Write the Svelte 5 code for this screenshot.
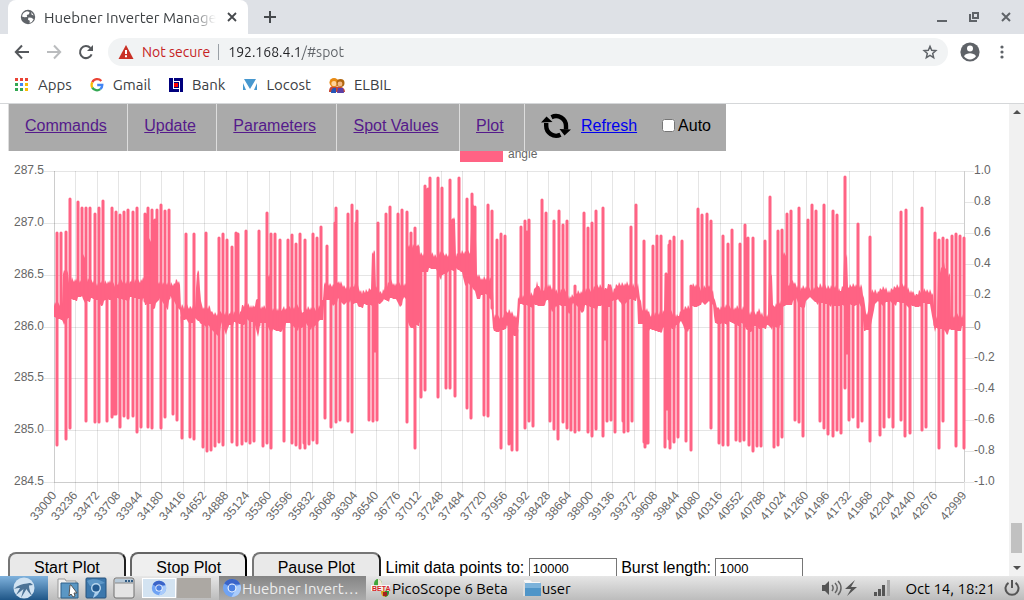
<script lang="ts">
	let refreshAuto = $state(false);
	let maxPoints = $state('10000');
	let burstLength = $state('1000');
	let address = $state('192.168.4.1/#spot');

	const navItems = ['Commands', 'Update', 'Parameters', 'Spot Values', 'Plot'];

	// Plot area
	const left = 54;
	const right = 964;
	const top = 171;
	const bottom = 482;

	// Category axis: one label every 236 samples, plus the last sample
	const firstSample = 33000;
	const lastSample = 42999;
	const xTicks: { label: number; x: number }[] = [];
	for (let s = firstSample; s < 42700; s += 236) {
		xTicks.push({ label: s, x: Math.round(left + ((right - left) * (s - firstSample)) / (lastSample - firstSample)) });
	}
	xTicks.push({ label: lastSample, x: right });

	const leftTicks = ['287.5', '287.0', '286.5', '286.0', '285.5', '285.0', '284.5'].map((label, i) => ({
		label,
		y: Math.round(top + ((bottom - top) * i) / 6)
	}));
	const rightTicks = ['1.0', '0.8', '0.6', '0.4', '0.2', '0', '-0.2', '-0.4', '-0.6', '-0.8', '-1.0'].map((label, i) => ({
		label,
		y: Math.round(top + ((bottom - top) * i) / 10)
	}));

	// Noise band of the signal: x, upper edge, lower edge
	const band = [
		[54, 305, 318], [62, 304, 319], [63, 272, 320], [65, 270, 325], [68, 272, 319], [69, 285, 319],
		[71, 279, 299], [78, 281, 299], [82, 283, 297], [83, 256, 299], [86, 256, 305], [87, 281, 300],
		[92, 281, 300], [98, 285, 300], [101, 282, 305], [107, 282, 300], [115, 285, 300], [120, 282, 300],
		[130, 282, 299], [140, 281, 298], [144, 280, 301], [145, 240, 306], [152, 240, 303], [153, 281, 308],
		[157, 282, 304], [160, 283, 299], [168, 284, 308], [170, 284, 298], [174, 284, 301], [177, 281, 306],
		[180, 285, 308], [181, 306, 323], [186, 307, 320], [190, 308, 323], [195, 306, 320], [197, 273, 321],
		[199, 273, 322], [201, 303, 324], [204, 309, 324], [210, 308, 328], [212, 313, 331], [218, 314, 335],
		[222, 313, 324], [226, 313, 335], [229, 314, 324], [240, 313, 324], [243, 306, 324], [247, 304, 321],
		[250, 306, 323], [254, 308, 321], [258, 297, 335], [260, 307, 325], [266, 308, 323], [267, 275, 325],
		[270, 275, 330], [271, 309, 330], [276, 309, 332], [281, 313, 331], [283, 306, 328], [286, 311, 325],
		[290, 307, 324], [300, 307, 330], [303, 314, 328], [306, 309, 323], [313, 309, 330], [320, 308, 319],
		[323, 300, 318], [324, 283, 303], [330, 286, 300], [333, 286, 305], [338, 281, 300], [344, 287, 305],
		[349, 288, 299], [353, 287, 305], [357, 284, 303], [358, 287, 306], [362, 293, 306], [367, 291, 306],
		[371, 288, 305], [372, 253, 305], [375, 253, 305], [376, 287, 305], [380, 293, 305], [384, 290, 299],
		[391, 281, 300], [396, 286, 299], [400, 284, 306], [404, 284, 299], [407, 284, 300], [408, 246, 322],
		[410, 246, 327], [419, 247, 327], [420, 254, 273], [424, 255, 271], [430, 253, 270], [436, 256, 269],
		[441, 254, 278], [447, 255, 273], [451, 255, 269], [452, 219, 269], [455, 220, 269], [456, 255, 270],
		[462, 253, 272], [465, 253, 284], [470, 252, 286], [472, 206, 288], [475, 208, 291], [477, 274, 298],
		[482, 279, 297], [486, 279, 294], [491, 279, 299], [493, 292, 326], [494, 317, 333], [498, 317, 333],
		[502, 317, 329], [507, 313, 327], [510, 311, 331], [514, 315, 336], [517, 318, 335], [518, 298, 332],
		[520, 297, 306], [528, 296, 305], [533, 294, 306], [537, 282, 306], [539, 289, 306], [543, 290, 305],
		[548, 285, 301], [552, 289, 312], [556, 291, 305], [560, 292, 307], [566, 290, 306], [569, 297, 313],
		[573, 297, 305], [577, 292, 306], [582, 292, 312], [585, 291, 307], [592, 290, 307], [598, 286, 308],
		[602, 286, 306], [605, 291, 307], [610, 283, 305], [613, 291, 302], [618, 285, 299], [625, 284, 306],
		[630, 285, 299], [637, 286, 299], [638, 286, 326], [642, 309, 324], [647, 309, 325], [650, 316, 331],
		[656, 314, 331], [661, 314, 331], [664, 312, 329], [665, 274, 329], [668, 274, 329], [669, 312, 328],
		[678, 316, 327], [681, 311, 321], [685, 308, 329], [690, 307, 331], [691, 286, 307], [696, 286, 307],
		[701, 289, 303], [705, 288, 306], [709, 285, 301], [713, 291, 303], [715, 303, 325], [718, 309, 325],
		[724, 307, 322], [735, 308, 324], [743, 308, 325], [746, 309, 329], [750, 314, 331], [756, 313, 327],
		[759, 311, 329], [763, 316, 327], [768, 315, 327], [769, 274, 327], [772, 275, 330], [773, 307, 326],
		[782, 302, 327], [783, 254, 308], [786, 254, 305], [787, 285, 305], [793, 282, 303], [796, 285, 299],
		[800, 289, 307], [804, 288, 306], [810, 289, 298], [816, 290, 301], [820, 285, 305], [827, 288, 303],
		[834, 287, 307], [840, 291, 305], [843, 287, 303], [844, 257, 304], [847, 257, 305], [848, 288, 304],
		[853, 285, 305], [858, 286, 303], [862, 287, 310], [864, 300, 331], [867, 316, 329], [871, 292, 327],
		[875, 291, 305], [878, 292, 301], [884, 288, 305], [890, 292, 301], [896, 286, 304], [904, 286, 303],
		[910, 291, 307], [916, 296, 307], [920, 291, 305], [930, 291, 304], [933, 294, 320], [935, 316, 330],
		[937, 318, 330], [938, 276, 330], [944, 263, 329], [947, 276, 333], [950, 275, 331], [951, 316, 331],
		[958, 316, 330], [964, 316, 327]
	];

	// Both band edges at x, between the two nearest points
	function edges(x: number) {
		const i = Math.max(1, band.findIndex((b) => b[0] >= x));
		const [x0, hi0, lo0] = band[i - 1];
		const [x1, hi1, lo1] = band[i];
		const t = (x - x0) / (x1 - x0);
		return [hi0 + (hi1 - hi0) * t, lo0 + (lo1 - lo0) * t];
	}

	// Sample noise along the band edges
	const upper: string[] = [];
	const lower: string[] = [];
	for (let x = left; x <= right; x++) {
		const [hi, lo] = edges(x);
		upper.push(`${x} ${Math.round(hi + ((x * 37) % 11) / 2 - 3)}`);
		lower.unshift(`${x} ${Math.round(lo + ((x * 53) % 13) / 3 - 2)}`);
	}
	const bandPath = `M${upper.join('L')}L${lower.join('L')}Z`;

	// Spikes leaving the band upwards: x, tip
	const peaks = [
		[57, 232], [61, 232], [66, 231], [70, 198], [78, 201], [82, 207], [86, 207], [90, 207], [95, 213],
		[99, 207], [103, 200], [112, 207], [116, 211], [120, 214], [124, 211], [128, 209], [133, 211], [137, 207],
		[145, 213], [148, 207], [152, 209], [155, 219], [157, 209], [161, 204], [165, 210], [169, 209],
		[186, 233], [194, 233], [206, 232], [219, 237], [223, 233], [227, 239], [232, 246], [236, 232], [238, 233],
		[246, 230], [259, 230], [267, 212], [271, 233], [275, 233], [280, 239], [288, 239], [292, 234], [296, 243],
		[300, 233], [305, 239], [313, 233], [317, 237], [321, 226], [327, 245], [335, 222], [336, 207], [348, 213],
		[352, 204], [356, 222], [357, 210], [378, 222], [386, 213], [390, 206], [398, 213], [402, 209], [407, 211],
		[411, 232], [415, 227], [418, 246], [425, 185], [428, 188], [430, 177], [438, 177], [442, 187], [450, 179],
		[453, 219], [459, 177], [467, 198], [472, 193], [475, 206], [488, 204], [492, 210], [497, 239], [501, 233],
		[505, 235], [521, 226], [525, 220], [527, 231], [529, 219], [542, 199], [546, 212], [554, 220], [559, 210],
		[563, 224], [567, 220], [575, 285], [584, 212], [588, 227], [592, 222], [596, 210], [603, 207], [631, 226],
		[636, 204], [644, 240], [653, 245], [657, 235], [661, 235], [666, 273], [669, 244], [670, 240], [674, 236],
		[682, 240], [691, 285], [698, 208], [702, 214], [707, 213], [711, 220], [723, 235], [728, 243], [732, 229],
		[740, 243], [745, 224], [748, 237], [753, 237], [765, 240], [770, 196], [778, 230], [782, 229], [787, 213],
		[791, 210], [799, 207], [808, 219], [812, 204], [816, 210], [824, 204], [833, 210], [837, 214], [845, 176],
		[858, 223], [870, 236], [901, 211], [906, 209], [922, 207], [935, 232], [939, 239], [943, 237], [947, 239],
		[952, 235], [956, 233], [960, 235], [964, 237]
	];

	// Spikes leaving the band downwards: x, tip
	const dips = [
		[57, 446], [66, 440], [70, 429], [86, 422], [95, 423], [99, 423], [107, 422], [112, 418], [114, 415],
		[116, 415], [120, 428], [124, 417], [128, 419], [133, 417], [137, 433], [141, 428], [148, 428], [152, 429],
		[161, 429], [165, 418], [173, 415], [177, 421], [182, 439], [190, 438], [194, 440], [203, 448], [207, 452],
		[211, 451], [215, 447], [219, 443], [223, 446], [232, 443], [237, 446], [242, 445], [246, 442], [250, 444],
		[254, 442], [263, 447], [267, 444], [271, 449], [284, 442], [292, 444], [296, 446], [300, 449], [304, 444],
		[305, 449], [309, 445], [313, 441], [317, 444], [325, 419], [331, 428], [336, 423], [340, 421], [348, 422],
		[352, 433], [369, 421], [373, 422], [375, 352], [377, 421], [407, 423], [415, 449], [421, 398], [425, 391],
		[438, 398], [446, 389], [450, 389], [455, 397], [467, 409], [471, 419], [484, 416], [488, 417], [501, 449],
		[509, 445], [512, 451], [517, 451], [525, 429], [529, 422], [533, 427], [550, 422], [554, 430], [558, 440],
		[563, 423], [567, 429], [571, 431], [575, 433], [579, 431], [588, 433], [592, 437], [596, 430], [603, 437],
		[605, 340], [607, 422], [611, 421], [615, 433], [623, 422], [624, 433], [628, 432], [632, 422], [644, 443],
		[645, 448], [647, 444], [648, 444], [665, 448], [667, 410], [669, 440], [670, 449], [674, 443], [678, 438],
		[686, 442], [691, 451], [711, 429], [719, 444], [723, 446], [728, 446], [736, 441], [740, 442], [744, 441],
		[749, 446], [753, 452], [757, 447], [761, 447], [774, 448], [778, 446], [782, 438], [795, 421], [799, 423],
		[803, 437], [820, 422], [824, 429], [828, 435], [833, 437], [837, 431], [841, 434], [845, 389], [847, 354],
		[849, 421], [853, 418], [858, 428], [862, 422], [870, 442], [880, 436], [884, 428], [889, 418], [893, 428],
		[901, 421], [905, 437], [910, 434], [922, 431], [926, 428], [939, 449], [943, 422], [956, 447], [964, 449]
	];

	const spikePath =
		peaks.map(([x, y]) => `M${x} ${Math.round(edges(x)[1] - 5)}V${y + 1}`).join('') +
		dips.map(([x, y]) => `M${x} ${Math.round(edges(x)[1] - 5)}V${y - 1}`).join('');
</script>

{#snippet chromium()}
	<svg class="icon20" viewBox="0 0 20 20" aria-hidden="true">
		<circle cx="10" cy="10" r="9" fill="#6fa3f4" />
		<path d="M10 10 2.2 5.5A9 9 0 0 1 18.3 6.5H10z" fill="#3a64c8" />
		<path d="M10 10 18.3 6.5A9 9 0 0 1 9.5 19l4-7z" fill="#a9cbfb" />
		<circle cx="10" cy="10" r="4.4" fill="#fff" />
		<circle cx="10" cy="10" r="3.4" fill="#4b80e2" />
	</svg>
{/snippet}

<div class="screen">
	<header class="tab-strip">
		<div class="tab">
			<svg class="icon16" viewBox="0 0 16 16" aria-hidden="true">
				<circle cx="8" cy="8" r="7.2" fill="#5f6368" />
				<path d="M7 2.3 9.5 3 9 5.2 6.8 6 7.2 8 4.5 8.3 2 7.5A6.2 6.2 0 0 1 7 2.3zM8.4 8.6l3 .2 2.2 1.4a6 6 0 0 1-4 3.8l.2-2.3-1.8-1zM11.3 3l2.5 3.4-2.2-.6z" fill="#fff" />
			</svg>
			<span class="tab-title">Huebner Inverter Manager</span>
			<button class="plain" aria-label="Close tab">
				<svg width="10" height="10" viewBox="0 0 10 10"><path d="M1 1l8 8M9 1 1 9" stroke="#45484c" stroke-width="1.8" /></svg>
			</button>
		</div>
		<button class="plain new-tab" aria-label="New tab">
			<svg width="12" height="12" viewBox="0 0 12 12"><path d="M6 0v12M0 6h12" stroke="#45484c" stroke-width="2" /></svg>
		</button>
		<div class="window-buttons">
			<button class="plain" aria-label="Minimise">
				<svg width="10" height="12" viewBox="0 0 10 12"><path d="M0 10h10" stroke="#5f6368" stroke-width="2" /></svg>
			</button>
			<button class="plain" aria-label="Restore">
				<svg width="10" height="10" viewBox="0 0 10 10"><path d="M4 1h5v5H4zM1 2v7h7" fill="none" stroke="#5f6368" stroke-width="2" /></svg>
			</button>
			<button class="plain" aria-label="Close">
				<svg width="10" height="10" viewBox="0 0 10 10"><path d="M1 1l8 8M9 1 1 9" stroke="#5f6368" stroke-width="2" /></svg>
			</button>
		</div>
	</header>

	<div class="toolbar">
		<button class="plain" aria-label="Back">
			<svg width="16" height="16" viewBox="0 0 16 16"><path d="M15 8H2M8 1.5 1.8 8 8 14.5" fill="none" stroke="#55585c" stroke-width="2" /></svg>
		</button>
		<button class="plain" aria-label="Forward">
			<svg width="16" height="16" viewBox="0 0 16 16"><path d="M1 8h13M8 1.5 14.2 8 8 14.5" fill="none" stroke="#babcbe" stroke-width="2" /></svg>
		</button>
		<button class="plain" aria-label="Reload">
			<svg width="16" height="16" viewBox="0 0 16 16"><path d="M13.6 10.3A6 6 0 1 1 12.4 4" fill="none" stroke="#55585c" stroke-width="2" /><path d="M15 1v6H9z" fill="#55585c" /></svg>
		</button>
		<div class="omnibox">
			<svg width="16" height="14" viewBox="0 0 16 14" aria-hidden="true">
				<path d="M8 0 15.5 14H.5z" fill="#c93025" />
				<path d="M7 5h2v4H7zM7 10.3h2v2H7z" fill="#fff" />
			</svg>
			<span class="not-secure">Not secure</span>
			<input class="address" type="text" aria-label="Address" bind:value={address} />
			<button class="plain" aria-label="Bookmark this page">
				<svg width="16" height="16" viewBox="0 0 24 24"><path d="m12 3.5 2.5 6 6.3.5-4.8 4.2 1.500 6.3-5.500-3.400-5.500 3.400L8 14.200 3.200 10l6.300-.5z" fill="none" stroke="#5f6368" stroke-width="2.2" /></svg>
			</button>
		</div>
		<button class="plain" aria-label="Profile">
			<svg width="20" height="20" viewBox="0 0 20 20"><circle cx="10" cy="10" r="9.6" fill="#5f6368" /><circle cx="10" cy="6.5" r="3" fill="#fff" /><path d="M4 14.2c1-2.200 4-3 6-3s5 .8 6 3a7.200 7.200 0 0 1-12 0z" fill="#fff" /></svg>
		</button>
		<button class="plain menu" aria-label="Menu">
			<svg width="4" height="14" viewBox="0 0 4 14"><g fill="#5f6368"><circle cx="2" cy="2" r="1.6" /><circle cx="2" cy="7" r="1.6" /><circle cx="2" cy="12" r="1.6" /></g></svg>
		</button>
	</div>

	<nav class="bookmarks" aria-label="Bookmarks">
		<a href="#apps">
			<svg width="14" height="14" viewBox="0 0 14 14">
				<path d="M0 0h3v3H0zM5 0h3v3H5zM10 0h3v3h-3z" fill="#ea4335" />
				<path d="M0 5h3v3H0zM0 10h3v3H0z" fill="#34a853" />
				<path d="M5 5h3v3H5z" fill="#4285f4" />
				<path d="M5 10h3v3H5z" fill="#34a853" /><path d="M10 5h3v3h-3zM10 10h3v3h-3z" fill="#fbbc05" />
			</svg>
			Apps
		</a>
		<a href="#gmail">
			<svg width="14" height="14" viewBox="0 0 14 14" fill="none" stroke-width="2.3">
				<path d="M11.3 3A5.400 5.400 0 0 0 2.300 4.400" stroke="#ea4335" />
				<path d="M2.3 4.400a5.400 5.400 0 0 0 0 5.200" stroke="#fbbc05" />
				<path d="M2.3 9.600a5.400 5.400 0 0 0 8 1.600" stroke="#34a853" />
				<path d="M10.3 11.200A5.400 5.400 0 0 0 12.300 7H7.200" stroke="#4285f4" />
			</svg>
			Gmail
		</a>
		<a href="#bank">
			<svg width="14" height="14" viewBox="0 0 14 14">
				<path d="M0 0h14v14H0z" fill="#00007d" />
				<path d="M4 0h1v10h5v1H4zM5 3h6v11h-1V4H5z" fill="#fff" /><path d="M5 5h4v4H5z" fill="#f00" />
			</svg>
			Bank
		</a>
		<a href="#locost">
			<svg width="14" height="14" viewBox="0 0 14 14">
				<path d="M1 1h12L7 11zM0 5l3 7H0zM14 5l-3 7h3z" fill="#4798cf" />
			</svg>
			Locost
		</a>
		<a href="#elbil">
			<svg width="16" height="16" viewBox="0 0 16 16">
				<path d="M0 15c0-4 2-6 4-6l7 1c3 0 5 2 5 5z" fill="#c74634" />
				<path d="M2 16c0-4 2-6 5-5v5z" fill="#2455b8" /><path d="M9 11h5l1 5H8z" fill="#5b3fa5" />
				<circle cx="5" cy="5.5" r="4.5" fill="#e88a12" /><circle cx="5" cy="6.5" r="2.6" fill="#ffd49a" />
				<circle cx="11.5" cy="6" r="4" fill="#b0660f" /><circle cx="11" cy="7" r="2.4" fill="#f5b984" />
			</svg>
			ELBIL
		</a>
	</nav>

	<div class="viewport">
		<main class="page">
			<nav class="navbar" aria-label="Inverter">
				<ul>
					{#each navItems as item}
						<li><a href="#{item.toLowerCase().replace(' ', '-')}">{item}</a>&nbsp;</li>
					{/each}
					<li class="refresh">
						<svg width="30" height="26" viewBox="0 0 30 26" aria-hidden="true">
							<path d="M10.5 4.200A10 10 0 0 1 25 13.500v3M19.500 21.800A10 10 0 0 1 5.200 12.500V10" fill="none" stroke="#000" stroke-width="4.4" />
							<path d="M18.5 16 30 16.500 23.500 22.500zM0 9.500 11.500 9 5.500 3.500z" fill="#000" />
						</svg>
						<a class="fresh" href="#refresh">Refresh</a>
						<label><input type="checkbox" bind:checked={refreshAuto} />Auto</label>
					</li>
				</ul>
			</nav>

			<svg class="chart" viewBox="0 104 1009 446" role="img" aria-label="angle">
				<rect x="460" y="150" width="43" height="12" fill="#ff6384" />
				<text x="508" y="158">angle</text>

				<g class="grid">
					{#each xTicks as tick}
						<rect x={tick.x} y={top} width="1" height="321" />
					{/each}
					{#each leftTicks as tick}
						<rect x="44" y={tick.y} width="920" height="1" />
					{/each}
					{#each rightTicks as tick}
						<rect x="965" y={tick.y} width="9" height="1" />
					{/each}
					<rect x={left} y={top} width="1" height="311" />
					<rect x={right} y={top} width="1" height="311" />
					<rect x={left} y={bottom} width="910" height="1" />
					<rect x="965" y="327" width="9" height="1" />
				</g>

				<path d={bandPath} fill="#ff6384" />
				<path d={spikePath} fill="none" stroke="#ff6384" stroke-width="3" stroke-linecap="round" />

				{#each leftTicks as tick}
					<text x="44" y={tick.y + 3} text-anchor="end">{tick.label}</text>
				{/each}
				{#each rightTicks as tick}
					<text x="974" y={tick.y + 3}>{tick.label}</text>
				{/each}
				{#each xTicks as tick}
					<text transform="translate({tick.x} 493) rotate(-50)" y="4" text-anchor="end">{tick.label}</text>
				{/each}
			</svg>

			<form class="controls" onsubmit={(e) => e.preventDefault()}>
				<button type="button">Start Plot</button>
				<button type="button" class="active">Stop Plot</button>
				<button type="button">Pause Plot</button>
				<label for="max-points">Limit data points to:</label>
				<input id="max-points" type="text" bind:value={maxPoints} />
				<label for="burst-length">Burst length:</label>
				<input id="burst-length" type="text" bind:value={burstLength} />
			</form>
		</main>
		<div class="scrollbar" aria-hidden="true">
			<svg width="8" height="4" viewBox="0 0 8 4"><path d="M0 4 4 0l4 4z" fill="#505050" /></svg>
			<span class="track"></span>
			<span class="thumb"></span>
			<svg width="8" height="4" viewBox="0 0 8 4"><path d="M0 0h8L4 4z" fill="#505050" /></svg>
		</div>
	</div>

	<footer class="taskbar">
		<button class="plain start" aria-label="Start menu">
			<svg width="22" height="22" viewBox="0 0 22 22">
				<circle cx="11" cy="11" r="10.5" fill="#d0e2f1" />
				<path d="M1 12C5 8 9 7 14 6.500c2-1 4-1 6 1.500l-4 .5c0 3 1 7 3 10-2-1-4-4-5.500-6.500L8 21l2.500-9L3 18l4-7c-2 0-4 0-6 1z" fill="#4c7396" />
			</svg>
		</button>
		<div class="launchers">
			<button class="plain" aria-label="File manager">
				<svg width="22" height="22" viewBox="0 0 22 22">
					<path d="M1 2h7l1 2h10v17H1z" fill="#f3f3f3" stroke="#999" />
					<path d="M4 6h17v15H4z" fill="#5a97c4" stroke="#2e6189" />
					<path d="m14 8 6 8h-3l1 3-2 1-2-3-2 2 1-11z" fill="#fff" stroke="#555" />
				</svg>
			</button>
			<button class="plain" aria-label="Browser">
				<svg width="22" height="22" viewBox="0 0 22 22">
					<rect x="1" y="1" width="20" height="20" rx="1" fill="#3c78ad" stroke="#27537d" />
					<path d="M2 4c5-3 13-2 18 2l-7 2-8 1z" fill="#5d97c7" /><path d="M15 11c0 5-3 8-7 10l2-6z" fill="#a8cdec" />
					<circle cx="11" cy="11" r="5" fill="#b8d7ef" /><circle cx="11" cy="11" r="3.6" fill="#245b91" />
				</svg>
			</button>
			<button class="plain" aria-label="Show desktop">
				<svg width="22" height="22" viewBox="0 0 22 22">
					<rect x="1" y="1" width="20" height="20" rx="2" fill="#e4e4e4" stroke="#707070" />
					<path d="M2 2h18v4H2z" fill="#b7c9d8" /><path d="M2 6h18" stroke="#888" /><path d="M12 4h2m1 0h2m1 0h2" stroke="#315c84" stroke-width="2" />
				</svg>
			</button>
		</div>
		<div class="pager">
			<button class="plain desk current" aria-label="Desktop 1">{@render chromium()}</button>
			<button class="plain desk" aria-label="Desktop 2"></button>
		</div>
		<button class="plain task pressed">{@render chromium()}<span>Huebner Invert…</span></button>
		<button class="plain task pico">
			<svg class="icon20" viewBox="0 0 20 20" aria-hidden="true">
				<ellipse cx="7" cy="6" rx="4" ry="5" fill="#40a63b" /><path d="M7 1a4 5 0 0 1 0 10z" fill="#f0e7d5" />
				<ellipse cx="14" cy="14" rx="4" ry="5" fill="#d9a21c" /><path d="M14 9a4 5 0 0 1 0 10z" fill="#27913b" /><path d="M12 14h4v4h-4z" fill="#a52020" />
				<rect y="7" width="19" height="6" fill="#fff" fill-opacity="0.8" />
				<text x="1" y="13" font-family="Liberation Sans" font-size="7" font-weight="700" fill="#d81e28">BETA</text>
			</svg>
			<span>PicoScope 6 Beta</span>
		</button>
		<button class="plain task user">
			<svg class="icon20" viewBox="0 0 20 20" aria-hidden="true">
				<path d="M2 2h6l2 2h8v4H2z" fill="#f7f7f7" /><path d="M1 4h2v14H1z" fill="#ddd" />
				<path d="M3 5h16v13H3z" fill="#4f95c8" /><path d="M3 5h16v5H3z" fill="#7bb2da" />
			</svg>
			<span>user</span>
		</button>
		<div class="tray">
			<svg width="38" height="18" viewBox="0 0 38 18" role="img" aria-label="Volume, power connected">
				<path d="M1 6h3l4-4v14l-4-4H1z" fill="#555" />
				<path d="M11 6c1.500 2 1.500 4 0 6M14 4c3 3 3 7 0 10M17 2c4 4 4 10 0 14" fill="none" stroke="#666" stroke-width="1.5" />
				<path d="M34 1 24 10h6l-4 7 10-9h-6z" fill="#555" />
			</svg>
			<svg class="signal" width="18" height="18" viewBox="0 0 18 18" role="img" aria-label="Signal">
				<path d="M1 13h3v4H1zM5 10h3v7H5zM9 6h3v11H9z" fill="#555" /><path d="M14 1h3v16h-3z" fill="#aaa" />
			</svg>
			<time datetime="10-14T18:21">Oct 14, 18:21</time>
			<button class="plain" aria-label="Shut down">
				<svg width="16" height="16" viewBox="0 0 16 16"><path d="M4.5 2.800a6.500 6.500 0 1 0 7 0M8 0v8" fill="none" stroke="#555" stroke-width="2" /></svg>
			</button>
		</div>
	</footer>
</div>

<style>
	:global(body) {
		margin: 0;
		background: #fff;
	}

	.screen {
		display: grid;
		grid-template-rows: auto auto auto minmax(0, 1fr) auto;
		height: 100vh;
		overflow: hidden;
		font-family: Ubuntu, 'Noto Sans', sans-serif;
		font-size: 15px;
		color: #3c4043;
	}

	svg {
		display: block;
		flex: none;
	}

	.icon16 {
		width: 16px;
		height: 16px;
	}

	.icon20 {
		width: 20px;
		height: 20px;
	}

	.plain {
		display: flex;
		align-items: center;
		padding: 0;
		border: 0;
		background: none;
		font: inherit;
		color: inherit;
	}

	/* Browser window */
	.tab-strip {
		display: flex;
		align-items: center;
		height: 34px;
		background: #dee1e6;
	}

	.tab {
		display: flex;
		align-items: center;
		box-sizing: border-box;
		width: 240px;
		height: 34px;
		margin-left: 8px;
		padding: 0 11px 0 12px;
		border-radius: 8px 8px 0 0;
		background: #fff;
	}

	.tab-title {
		flex: 1;
		margin: 0 11px 0 8px;
		overflow: hidden;
		white-space: nowrap;
		mask-image: linear-gradient(to right, #000 84%, transparent);
	}

	.new-tab {
		margin-left: 16px;
	}

	.window-buttons {
		display: flex;
		gap: 22px;
		margin-left: auto;
		padding-right: 13px;
	}

	.toolbar {
		display: flex;
		align-items: center;
		gap: 16px;
		height: 36px;
		padding: 0 16px 0 14px;
		font-size: 14px;
	}

	.omnibox {
		display: flex;
		flex: 1;
		align-items: center;
		height: 28px;
		margin: 0 -4px 0 -2px;
		padding: 0 10px;
		border-radius: 14px;
		background: #f1f3f4;
	}

	.not-secure {
		margin-left: 8px;
		padding-right: 8px;
		border-right: 1px solid #9aa0a6;
		line-height: 16px;
		color: #c5221f;
	}

	/* Host in dark, path in grey */
	.address {
		flex: 1;
		min-width: 0;
		margin-left: 9px;
		padding: 0;
		border: 0;
		outline: 0;
		background: linear-gradient(to right, #202124 74px, #5f6368 74px);
		background-clip: text;
		font: inherit;
		color: transparent;
		caret-color: #202124;
	}

	.menu {
		margin: 0 4px;
	}

	.bookmarks {
		display: flex;
		align-items: center;
		gap: 18px;
		box-sizing: border-box;
		height: 34px;
		padding: 0 15px 4px;
		border-bottom: 1px solid #d5d7d9;
	}

	.bookmarks a {
		display: flex;
		align-items: center;
		gap: 9px;
		color: #3c4043;
		text-decoration: none;
	}

	/* Web page */
	.viewport {
		display: flex;
		overflow: hidden;
		font-family: 'Liberation Sans', Arial, sans-serif;
		font-size: 16px;
		color: #000;
	}

	.page {
		position: relative;
		flex: 1;
		min-width: 0;
	}

	.navbar {
		position: absolute;
		top: 0;
		left: 8px;
	}

	.navbar ul {
		display: flex;
		margin: 0;
		padding: 0;
		background: #aaa;
		list-style: none;
	}

	.navbar li {
		display: flex;
		align-items: center;
		height: 43px;
		padding: 0 16px 4px;
		border-left: 1px solid #ddd;
		white-space: nowrap;
	}

	.navbar a {
		color: #551a8b;
	}

	.navbar .refresh {
		padding-right: 15px;
	}

	.navbar .fresh {
		margin: 0 25px 0 10px;
		color: #00e;
	}

	.navbar label {
		display: flex;
		align-items: center;
	}

	.navbar input {
		width: 13px;
		height: 13px;
		margin: 0 3px 0 0;
	}

	.chart {
		width: 100%;
		height: auto;
		font-size: 12px;
	}

	.chart text {
		fill: #666;
	}

	.grid rect {
		fill: rgba(0, 0, 0, 0.1);
	}

	.controls {
		padding: 2px 8px;
		white-space: nowrap;
	}

	.controls button {
		height: 31px;
		padding: 0 24px;
		border: 2px outset #767676;
		border-radius: 8px;
		background: #e9e9e9;
		font: inherit;
	}

	.controls .active {
		border-color: #111;
		background: #efefef;
	}

	.controls input {
		box-sizing: border-box;
		width: 88px;
		height: 21px;
		padding: 1px 3px;
		border: 1px solid #767676;
		font: 13px 'Liberation Sans', Arial, sans-serif;
	}

	.scrollbar {
		display: flex;
		flex-direction: column;
		align-items: center;
		box-sizing: border-box;
		width: 15px;
		padding: 6px 0;
		background: #f1f1f1;
	}

	.track {
		flex: 1;
	}

	.thumb {
		width: 11px;
		height: 30px;
		margin-bottom: 13px;
		background: #c1c1c1;
	}

	/* Desktop panel */
	.taskbar {
		display: flex;
		align-items: center;
		height: 24px;
		background: linear-gradient(#e6e6e6, #bcbcbc);
		color: #000;
		white-space: nowrap;
	}

	.start {
		justify-content: center;
		width: 48px;
		height: 24px;
		background: linear-gradient(#7fb2dd, #1f5687);
	}

	.launchers {
		display: flex;
		gap: 6px;
		margin: 0 7px 0 9px;
	}

	.pager {
		display: flex;
		gap: 1px;
	}

	.desk {
		justify-content: center;
		width: 34px;
		height: 20px;
		background: #aca8a3;
	}

	.desk .icon20 {
		width: 16px;
		height: 16px;
	}

	.current {
		box-sizing: border-box;
		border: 1px solid #fff;
		background: #d3e3f1;
	}

	.task {
		height: 24px;
	}

	.pressed {
		box-sizing: border-box;
		width: 147px;
		margin-left: 8px;
		padding-left: 3px;
		background: linear-gradient(#858585, #ababab);
		color: #eee;
	}

	.pico {
		gap: 1px;
		margin-left: 5px;
	}

	.user {
		margin-left: 14px;
	}

	.tray {
		display: flex;
		align-items: center;
		margin-left: auto;
		padding-right: 4px;
	}

	.signal {
		margin: 0 14px;
	}

	.tray time {
		margin-right: 9px;
	}
</style>
